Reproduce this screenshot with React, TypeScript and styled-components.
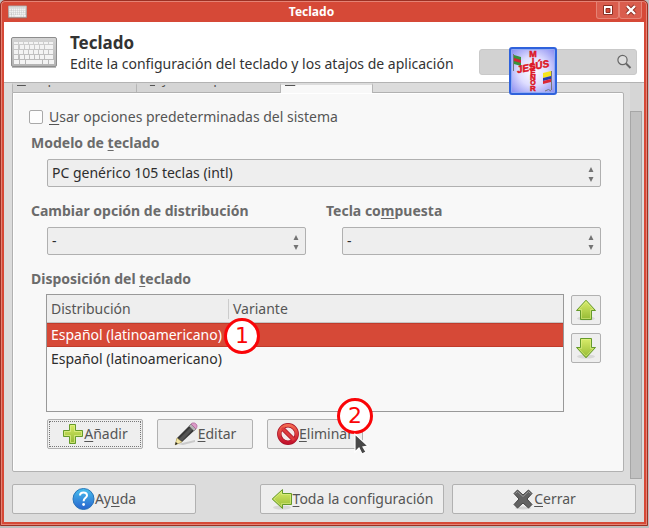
import React from "react";
import styled, { createGlobalStyle } from "styled-components";

const GlobalStyle = createGlobalStyle`
  * { box-sizing: border-box; }
  body { margin: 0; background: #bdbdbd; }
  body, button, input, select { font: 14px/20px "Noto Sans", "Open Sans", sans-serif; color: #555; }
  u { text-decoration-thickness: 1px; text-underline-offset: 2px; text-decoration-skip-ink: none; }
`;

const Desktop = styled.div`
  min-height: 100vh;
  padding: 0 1px 2px 0;
  display: flex;
`;
const Window = styled.main`
  flex: 1;
  display: flex;
  flex-direction: column;
  min-width: 0;
  padding: 1px 3px 3px;
  background: #d64937;
  border: 1px solid #9c3023;
  border-radius: 5px 5px 0 0;
  box-shadow: inset 0 0 0 1px #e58375;
`;
const TitleBar = styled.header`
  height: 20px;
  display: grid;
  grid-template-columns: auto 1fr auto;
  align-items: center;
  padding: 0 2px 0 4px;
  color: #fff;
`;
const WindowTitle = styled.div`
  text-align: center;
  font-size: 12px;
  font-weight: 700;
  line-height: 18px;
`;
const Controls = styled.div`
  display: flex;
  align-self: start;
`;
const ControlButton = styled.button`
  width: 23px;
  height: 17px;
  padding: 0;
  display: grid;
  place-items: center;
  background: #da5d4d;
  border: 1px solid #e58375;
  border-top: 0;
  border-radius: 0 0 3px 3px;
`;
const Header = styled.section`
  display: flex;
  align-items: center;
  height: 61px;
  padding: 0 7px;
  background: #fff;
  border-bottom: 1px solid #b3b3b3;
  color: #333;
`;
const Heading = styled.div`
  flex: 1;
  margin-left: 13px;
  padding-top: 1px;
  white-space: nowrap;
  h1 { margin: 0; font-size: 17px; line-height: 22px; }
  p { margin: 0; line-height: 19px; }
`;
const SearchBox = styled.label`
  position: relative;
  display: flex;
  align-items: center;
  width: 158px;
  height: 26px;
  margin-top: 20px;
  padding-right: 4px;
  background: #d2d2d2;
  border: 1px solid #c9c9c9;
  border-radius: 3px;
  input { flex: 1; min-width: 0; border: 0; background: none; outline: 0; }
`;
const Sticker = styled.svg`
  position: absolute;
  left: 29px;
  top: -3px;
  z-index: 2;
`;
const Body = styled.div`
  flex: 1;
  display: flex;
  background: #dcdcdc;
  padding: 0 2px 0 8px;
`;
const Notebook = styled.div`
  flex: 1;
  min-width: 0;
  display: flex;
  flex-direction: column;
`;
const TabStrip = styled.div`
  position: relative;
  z-index: 1;
  display: flex;
  align-items: flex-start;
  height: 10px;
  margin-bottom: -1px;
`;
const Tab = styled.button<{ $active?: boolean; $width: number }>`
  width: ${(p) => p.$width}px;
  height: ${(p) => (p.$active ? 10 : 9)}px;
  padding: 0 4px ${(p) => (p.$active ? 5 : 4)}px;
  display: flex;
  align-items: flex-end;
  overflow: hidden;
  white-space: nowrap;
  border: 0;
  border-left: 1px solid #b5b5b5;
  border-right: ${(p) => (p.$active ? "1px solid #b5b5b5" : "0")};
  border-top: 2px solid ${(p) => (p.$active ? "#dcdcdc" : "#d5d5d5")};
  background: ${(p) => (p.$active ? "#f8f8f8" : "#d5d5d5")};
`;
const Panel = styled.form`
  flex: 1;
  background: #f8f8f8;
  border: 1px solid #b1b1b1;
  border-radius: 0 2px 2px 2px;
  padding: 14px 22px 21px 18px;
  box-shadow: inset 1px 1px 0 #fff;
`;
const CheckLabel = styled.label`
  display: flex;
  align-items: center;
  height: 20px;
  margin-left: -2px;
  input {
    appearance: none;
    width: 14px;
    height: 14px;
    margin: 0 6px 0 0;
    background: #fdfdfd;
    border: 1px solid #a9a9a9;
    border-radius: 2px;
  }
`;
const FieldLabel = styled.label`
  display: block;
  font-weight: 700;
  line-height: 20px;
  color: #6b6b6b;
`;
const Field = styled.div`
  margin-top: 6px;
`;
const SelectFrame = styled.div`
  position: relative;
  margin: 6px 0 0 16px;
  svg { position: absolute; right: 6px; top: 7px; pointer-events: none; }
`;
const Select = styled.select`
  display: block;
  appearance: none;
  width: 100%;
  height: 28px;
  padding: 0 20px 0 4px;
  color: #2d2d2d;
  background: #eee;
  border: 1px solid #b0b0b0;
  border-radius: 2px;
`;
const Columns = styled.div`
  display: grid;
  grid-template-columns: 1fr 1fr;
  column-gap: 20px;
  margin: 8px 0 14px;
`;
const ListRow = styled.div`
  display: flex;
  gap: 7px;
  margin: 5px 0 0 15px;
`;
const ListFrame = styled.div`
  flex: 1;
  height: 118px;
  border: 1px solid #999;
`;
const Table = styled.table`
  width: 100%;
  border-collapse: separate;
  border-spacing: 0;
  table-layout: fixed;
  th, td { padding: 0 4px; text-align: left; white-space: nowrap; }
  th { height: 28px; font-weight: 400; background: #eee; border-bottom: 1px solid #c5c5c5; }
  th:first-child { width: 182px; background: linear-gradient(#ccc, #ccc) right center / 1px 20px no-repeat #eee; }
`;
const LayoutRow = styled.tr<{ $selected?: boolean }>`
  height: 24px;
  color: ${(p) => (p.$selected ? "#fff" : "#2d2d2d")};
  background: ${(p) => (p.$selected ? "#d64937" : "transparent")};
  td { position: relative; box-shadow: ${(p) => (p.$selected ? "inset 0 1px #c03b2b, inset 0 -1px #c03b2b" : "none")}; }
`;
const MoveButtons = styled.div`
  display: flex;
  flex-direction: column;
  gap: 8px;
  padding-top: 1px;
`;
const Button = styled.button<{ $width?: number; $focused?: boolean }>`
  position: relative;
  display: flex;
  align-items: center;
  justify-content: center;
  min-width: ${(p) => p.$width ?? 96}px;
  height: 30px;
  padding: 0;
  white-space: nowrap;
  background: #eee;
  border: 1px solid #b1b1b1;
  border-radius: 2px;
  outline: ${(p) => (p.$focused ? "1px dotted #777" : "none")};
  outline-offset: -3px;
  svg { flex: none; }
`;
const Actions = styled.div`
  display: flex;
  gap: 14px;
  margin: 7px 0 0 16px;
`;
const ScrollTrack = styled.div`
  position: relative;
  width: 12px;
  margin: 0 0 -7px 6px;
  padding-top: 28px;
  display: flex;
  background: #d6d6d6;
`;
const ScrollThumb = styled.div`
  flex: 1;
  background: #c1c1c1;
  border: 1px solid #a6a6a6;
`;
const Footer = styled.footer`
  display: grid;
  grid-template-columns: 184fr 64fr 184fr 8px 184fr;
  padding: 12px 8px 8px;
  background: #dcdcdc;
  > :nth-child(2) { grid-column: 3; }
  > :nth-child(3) { grid-column: 5; }
`;
const Badge = styled.span<{ $left: number; $top: number }>`
  position: absolute;
  left: ${(p) => p.$left}px;
  top: ${(p) => p.$top}px;
  z-index: 2;
  width: 36px;
  height: 36px;
  display: grid;
  place-items: center;
  background: #fff;
  border: 3px solid #fa0508;
  border-radius: 50%;
  color: #fa0508;
  font: 22px/28px "DejaVu Sans", sans-serif;
`;
const Pointer = styled.svg`
  position: absolute;
  left: 85px;
  top: 12px;
  z-index: 3;
`;

const KeyboardIcon = ({ width, height }: { width: number; height: number }) => (
  <svg width={width} height={height} viewBox="0 0 46 31" aria-hidden="true">
    <defs>
      <linearGradient id="kb" x2="0" y2="1"><stop stopColor="#d4d4d4" /><stop offset="1" stopColor="#b2b2b2" /></linearGradient>
    </defs>
    <rect x=".5" y=".5" width="45" height="29" rx="1.5" fill="url(#kb)" stroke="#8d8d8d" />
    <path d="M1 30.5h44" stroke="#777" opacity=".5" />
    <g fill="#f3f3f3">
      {[5, 8, 13, 18].map((y, r) =>
        Array.from({ length: 8 }, (_, i) => (
          <rect key={`${y}-${i}`} x={3 + i * 5 + (r % 2 && i > 0 && i < 7 ? 1 : 0)} y={y} width="4" height={r === 0 ? 2 : 4} />
        ))
      )}
      <path d="M3 23h5v4H3zM9 23h5v4H9zM15 23h16v4H15zM32 23h5v4h-5zM38 23h5v4h-5z" />
    </g>
  </svg>
);

const Spinner = () => (
  <svg width="8" height="17" viewBox="0 0 8 17" aria-hidden="true">
    <path d="M4 1 6.500 6h-5zM1.500 11h5L4 16z" fill="#737373" />
  </svg>
);

const rotations = { up: 0, down: 180, left: -90 };
const ArrowIcon = ({ dir }: { dir: keyof typeof rotations }) => (
  <svg width="22" height="22" viewBox="0 0 22 22" aria-hidden="true">
    <defs>
      <linearGradient id={`arrow-${dir}`} gradientUnits="userSpaceOnUse" x1="0" y1="1" x2="0" y2="21" gradientTransform={`rotate(${-rotations[dir]} 11 11)`}>
        <stop stopColor="#dcee6c" /><stop offset="1" stopColor="#93b932" />
      </linearGradient>
    </defs>
    <ellipse cx="11" cy="19.5" rx="9" ry="2" fill="#000" opacity=".09" />
    <g transform={`rotate(${rotations[dir]} 11 11)`}>
      <path d="M11 1.200 20.500 11.500h-4v9h-11v-9h-4z" fill={`url(#arrow-${dir})`} stroke="#659a2b" strokeLinejoin="round" />
      <path d="M11 2.900 18.200 10.500h-2.700v9h-9v-9H3.800z" fill="none" stroke="#e4f391" opacity=".5" />
    </g>
  </svg>
);

const PlusIcon = () => (
  <svg width="22" height="22" viewBox="0 0 22 22" aria-hidden="true">
    <defs><linearGradient id="plus" x2="0" y2="1"><stop stopColor="#d9ec65" /><stop offset="1" stopColor="#8fb633" /></linearGradient></defs>
    <path d="M7.5 1.5h6v6h7v6h-7v7h-6v-7h-6v-6h6z" fill="url(#plus)" stroke="#659a2b" />
    <path d="M8.5 2.5h4v6h7v4h-7v7h-4v-7h-6v-4h6z" fill="none" stroke="#e4f391" opacity=".65" />
  </svg>
);

const PencilIcon = () => (
  <svg width="24" height="24" viewBox="0 0 24 24" aria-hidden="true">
    <path d="m4 22 17-4v2L9 23z" opacity=".15" />
    <path d="M1 23 3 16 17 2l5 5L8 20z" fill="#383838" />
    <path d="m5 17 13-13 2 2L8 19z" fill="#555" />
    <path d="m1 23 2-7 5 4z" fill="#f2e5a1" stroke="#bca95b" strokeWidth=".5" />
    <path d="m1 23 .8-3 2 1.700z" fill="#222" />
    <path d="m15 4 2-2 5 5-2 2z" fill="#b4b4b4" stroke="#777" strokeWidth=".5" />
    <path d="m17 2 1-1q3-1 5 2v2l-1 2z" fill="#dc9ac8" stroke="#a55c90" strokeWidth=".6" />
  </svg>
);

const BlockIcon = () => (
  <svg width="22" height="22" viewBox="0 0 22 22" aria-hidden="true">
    <defs><linearGradient id="block" x2="0" y2="1"><stop stopColor="#f36950" /><stop offset="1" stopColor="#c5122c" /></linearGradient></defs>
    <circle cx="11" cy="11" r="8" fill="#f3eaea" />
    <g fill="none">
      <circle cx="11" cy="11" r="8.7" stroke="#a80f24" strokeWidth="4.4" />
      <path d="m5 5 12 12" stroke="#a80f24" strokeWidth="4.5" />
      <circle cx="11" cy="11" r="8.7" stroke="url(#block)" strokeWidth="3" />
      <path d="m5 5 12 12" stroke="#dc3a3c" strokeWidth="3" />
    </g>
  </svg>
);

const HelpIcon = () => (
  <svg width="23" height="22" viewBox="0 0 23 22" aria-hidden="true">
    <defs><linearGradient id="help" x2="0" y2="1"><stop stopColor="#47bfee" /><stop offset="1" stopColor="#2864ce" /></linearGradient></defs>
    <circle cx="11.5" cy="11" r="10.5" fill="url(#help)" stroke="#2774b8" />
    <path d="M8 7.500c0-4 7-4 7 0 0 2.300-3.400 2.500-3.400 5.700" fill="none" stroke="#fff" strokeWidth="2" />
    <circle cx="11.6" cy="16.5" r="1.4" fill="#fff" />
  </svg>
);

const CrossIcon = () => (
  <svg width="22" height="22" viewBox="0 0 22 22" aria-hidden="true">
    <ellipse cx="11" cy="20" rx="8" ry="1.5" opacity=".12" />
    <path d="m5.500 2 5.500 5 5.500-5L20 5.500 15 11l5 5.500-3.500 3.500-5.500-5-5.500 5L2 16.500 7 11 2 5.500z" fill="#626262" stroke="#444" strokeLinejoin="round" />
    <path d="m3.500 5.500 2-2L11 8.500l5.500-5 2 2" fill="none" stroke="#999" />
  </svg>
);

const crossLetters: [string, number, number][] = [
  ["M", 10, 9], ["I", 16, 8], ["S", 22, 8], ["E", 28, 8], ["N", 33, 8], ["O", 38, 7], ["R", 44, 8],
];

const App = () => (
  <>
    <GlobalStyle />
    <Desktop>
      <Window>
        <TitleBar>
          <KeyboardIcon width={19} height={14} />
          <WindowTitle>Teclado</WindowTitle>
          <Controls>
            <ControlButton aria-label="Maximizar">
              <svg width="10" height="10" viewBox="0 0 10 10"><path d="M.5.5h9v9h-9z" fill="#fff" stroke="#8c2f23" /><path d="M3 3.500h4v4H3z" fill="#d64937" stroke="#8c2f23" /></svg>
            </ControlButton>
            <ControlButton aria-label="Cerrar ventana">
              <svg width="12" height="12" viewBox="0 0 12 12"><path d="m2 2 8 8m0-8-8 8" stroke="#8c2f23" strokeWidth="4" /><path d="m2 2 8 8m0-8-8 8" stroke="#fff" strokeWidth="2.4" /></svg>
            </ControlButton>
          </Controls>
        </TitleBar>
        <Header>
          <KeyboardIcon width={46} height={31} />
          <Heading>
            <h1>Teclado</h1>
            <p>Edite la configuración del teclado y los atajos de aplicación</p>
          </Heading>
          <SearchBox>
            <input type="text" aria-label="Buscar" />
            <svg width="16" height="16" viewBox="0 0 16 16" aria-hidden="true">
              <circle cx="6.5" cy="6" r="4.6" fill="#dedede" stroke="#666" strokeWidth="1.2" />
              <path d="m10 9.500 4.500 4.500" stroke="#666" strokeWidth="2" />
            </svg>
            <Sticker width="48" height="48" viewBox="0 0 48 48" aria-hidden="true">
              <defs><radialGradient id="sticker" r=".7"><stop stopColor="#fff" /><stop offset=".45" stopColor="#deddff" /><stop offset="1" stopColor="#7f82ef" /></radialGradient></defs>
              <rect x="1" y="1" width="46" height="46" rx="2" fill="url(#sticker)" stroke="#2f62dc" strokeWidth="2" />
              <rect x="2.5" y="2.5" width="43" height="43" rx="1" fill="none" stroke="#91aaf5" />
              <path d="M4.500 7v17M42.500 24v19" stroke="#777" />
              <path d="m5 8 7 2v9l-7-2z" fill="#37933a" /><path d="m5 11 7 2v3l-7-2z" fill="#d62435" />
              <path d="m34 26 8-2v5l-8 2z" fill="#f5e51c" /><path d="m34 31 8-2v3l-8 2z" fill="#243caf" /><path d="m34 34 8-2v3l-8 2z" fill="#dc2635" />
              <path d="M36 44q4-3 6 0" fill="none" stroke="#777" />
              <g fill="#dc1725" stroke="#dc1725" strokeWidth=".5" fontFamily="Liberation Sans" fontWeight="700" textAnchor="middle">
                {crossLetters.map(([letter, y, size]) => (
                  <text key={letter} x="24" y={y} fontSize={size}>{letter}</text>
                ))}
                <text x="24" y="23" fontSize="10" fontStyle="italic" transform="rotate(-12 24 20)">JESÚS</text>
              </g>
            </Sticker>
          </SearchBox>
        </Header>
        <Body>
          <Notebook>
            <TabStrip role="tablist">
              <Tab role="tab" type="button" $width={124}><span><u>C</u>omportamiento</span></Tab>
              <Tab role="tab" type="button" $width={144}><span>A<u>t</u>ajos de aplicación</span></Tab>
              <Tab role="tab" type="button" aria-selected="true" $active $width={93}><span><u>D</u>istribución</span></Tab>
            </TabStrip>
            <Panel onSubmit={(e) => e.preventDefault()}>
              <CheckLabel><input type="checkbox" /><span><u>U</u>sar opciones predeterminadas del sistema</span></CheckLabel>
              <Field>
                <FieldLabel htmlFor="model">Modelo de <u>t</u>eclado</FieldLabel>
                <SelectFrame>
                  <Select id="model"><option>PC genérico 105 teclas (intl)</option></Select>
                  <Spinner />
                </SelectFrame>
              </Field>
              <Columns>
                <Field>
                  <FieldLabel htmlFor="change">Cambiar opción de distribución</FieldLabel>
                  <SelectFrame><Select id="change"><option>-</option></Select><Spinner /></SelectFrame>
                </Field>
                <Field>
                  <FieldLabel htmlFor="compose">Tecla co<u>m</u>puesta</FieldLabel>
                  <SelectFrame><Select id="compose"><option>-</option></Select><Spinner /></SelectFrame>
                </Field>
              </Columns>
              <FieldLabel as="div" id="layouts">Disposición del <u>t</u>eclado</FieldLabel>
              <ListRow>
                <ListFrame>
                  <Table aria-labelledby="layouts">
                    <thead><tr><th>Distribución</th><th>Variante</th></tr></thead>
                    <tbody>
                      <LayoutRow $selected aria-selected="true"><td>Español (latinoamericano)<Badge $left={177} $top={-5}>1</Badge></td><td /></LayoutRow>
                      <LayoutRow><td>Español (latinoamericano)</td><td /></LayoutRow>
                    </tbody>
                  </Table>
                </ListFrame>
                <MoveButtons>
                  <Button type="button" $width={30} aria-label="Subir"><ArrowIcon dir="up" /></Button>
                  <Button type="button" $width={30} aria-label="Bajar"><ArrowIcon dir="down" /></Button>
                </MoveButtons>
              </ListRow>
              <Actions>
                <Button type="button" $focused><PlusIcon /><span><u>A</u>ñadir</span></Button>
                <Button type="button"><PencilIcon /><span><u>E</u>ditar</span></Button>
                <Button type="button"><BlockIcon /><span><u>E</u>liminar</span>
                  <Badge $left={69} $top={-22}>2</Badge>
                  <Pointer width="16" height="24" viewBox="0 0 16 24" aria-hidden="true">
                    <path d="M2 2v18l4-4 3 6 4-2-3-5 5-1z" fill="#484848" stroke="#fff" strokeWidth="1.2" />
                  </Pointer>
                </Button>
              </Actions>
            </Panel>
          </Notebook>
          <ScrollTrack><ScrollThumb /></ScrollTrack>
        </Body>
        <Footer>
          <Button type="button"><HelpIcon /><span>Ay<u>u</u>da</span></Button>
          <Button type="button"><ArrowIcon dir="left" /><span><u>T</u>oda la configuración</span></Button>
          <Button type="button"><CrossIcon /><span><u>C</u>errar</span></Button>
        </Footer>
      </Window>
    </Desktop>
  </>
);

export default App;
